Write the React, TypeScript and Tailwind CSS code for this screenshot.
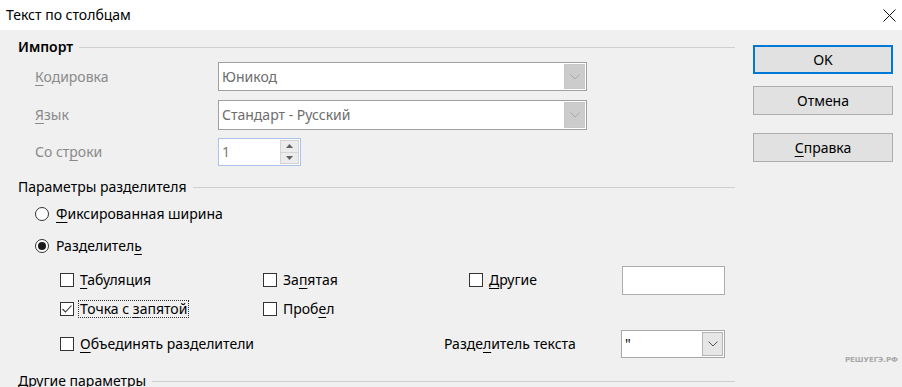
import React from 'react';

const Key: React.FC<{ text: string; at: number }> = ({ text, at }) => (
  <>
    {text.slice(0, at)}
    <span className="underline underline-offset-[3px] decoration-1">{text[at]}</span>
    {text.slice(at + 1)}
  </>
);

const Heading: React.FC<{ children: React.ReactNode; bold?: boolean; className?: string }> = ({ children, bold, className }) => (
  <div className={`flex items-center h-[20px] ${className ?? ''}`}>
    <span className={bold ? 'font-semibold' : ''}>{children}</span>
    <div className="flex-1 h-px bg-[#cfcfcf] ml-[6px] mt-[1px]" />
  </div>
);

const Chevron: React.FC<{ color: string }> = ({ color }) => (
  <svg width="10" height="6" viewBox="0 0 10 6">
    <path d="M0.5 0.5 L5 5 L9.5 0.5" fill="none" stroke={color} strokeWidth="1" />
  </svg>
);

const Combo: React.FC<{ value: string; disabled?: boolean; className?: string }> = ({ value, disabled, className }) => (
  <div
    className={`flex items-stretch bg-white border p-px ${disabled ? 'border-[#a0a0a0]' : 'border-[#a8a8a8]'} ${className ?? ''}`}
  >
    <span className={`flex-1 flex items-center pl-[2px] ${disabled ? 'text-[#6d6d6d]' : 'text-black'}`}>{value}</span>
    <div
      className={`w-[21px] flex items-center justify-center border ${disabled ? 'bg-[#cccccc] border-[#c8c8c8]' : 'bg-[#e6e6e6] border-[#b4b4b4]'}`}
    >
      <Chevron color={disabled ? '#a8a8a8' : '#555555'} />
    </div>
  </div>
);

const CheckBox: React.FC<{ checked?: boolean }> = ({ checked }) => (
  <span className="w-[14px] h-[14px] border border-[#333333] bg-white flex items-center justify-center shrink-0">
    {checked && (
      <svg width="12" height="12" viewBox="0 0 12 12">
        <path d="M1.5 6 L4.5 9 L10.5 2.5" fill="none" stroke="#333333" strokeWidth="1.1" />
      </svg>
    )}
  </span>
);

const Radio: React.FC<{ checked?: boolean }> = ({ checked }) => (
  <span className="w-[14px] h-[14px] rounded-full border border-[#333333] bg-white flex items-center justify-center shrink-0">
    {checked && <span className="w-[8px] h-[8px] rounded-full bg-[#1a1a1a]" />}
  </span>
);

const Check: React.FC<{ label: React.ReactNode; checked?: boolean; focused?: boolean }> = ({ label, checked, focused }) => (
  <div className="flex items-center gap-[5px]">
    <CheckBox checked={checked} />
    <span className={focused ? 'outline outline-1 outline-dotted outline-[#333] px-px leading-[16px]' : 'pl-px'}>{label}</span>
  </div>
);

const Button: React.FC<{ children: React.ReactNode; primary?: boolean; className?: string }> = ({ children, primary, className }) => (
  <div
    className={`w-[140px] h-[29px] flex items-center justify-center bg-[#e1e1e1] ${primary ? 'border-2 border-[#0078d7]' : 'border border-[#adadad]'} ${className ?? ''}`}
  >
    {children}
  </div>
);

export default function App() {
  return (
    <div className="w-[902px] h-[387px] overflow-hidden bg-[#f0f0f0] font-['Noto_Sans',sans-serif] text-[14px] text-black leading-none">
      <div className="h-[30px] bg-white flex items-center justify-between pl-[6px] pr-[6px]">
        <span className="text-[14px]">Текст по столбцам</span>
        <svg width="13" height="13" viewBox="0 0 13 13">
          <path d="M0.5 0.5 L12.5 12.5 M12.5 0.5 L0.5 12.5" stroke="#111" strokeWidth="1" />
        </svg>
      </div>

      <div className="flex">
        <div className="w-[735px] pl-[18px]">
          <Heading bold className="mt-[7px]">Импорт</Heading>

          <div className="flex items-center h-[29px] mt-[5px] pl-[17px]">
            <span className="w-[183px] text-[#8a8a8a]"><Key text="Кодировка" at={0} /></span>
            <Combo value="Юникод" disabled className="w-[369px] h-full" />
          </div>
          <div className="flex items-center h-[30px] mt-[9px] pl-[17px]">
            <span className="w-[183px] text-[#8a8a8a]"><Key text="Язык" at={0} /></span>
            <Combo value="Стандарт - Русский" disabled className="w-[369px] h-full" />
          </div>
          <div className="flex items-center h-[28px] mt-[8px] pl-[17px]">
            <span className="w-[183px] text-[#8a8a8a]"><Key text="Со строки" at={5} /></span>
            <div className="w-[83px] h-full flex items-stretch bg-white border border-[#a9c4e6] p-px">
              <span className="flex-1 flex items-center pl-[2px] text-[#7a7a7a]">1</span>
              <div className="w-[19px] flex flex-col border border-[#d4d4d4]">
                <div className="flex-1 flex items-center justify-center bg-[#ececec] border-b border-[#d4d4d4]">
                  <svg width="7" height="4" viewBox="0 0 7 4"><path d="M0 4 L3.5 0 L7 4 Z" fill="#606060" /></svg>
                </div>
                <div className="flex-1 flex items-center justify-center bg-[#ececec]">
                  <svg width="7" height="4" viewBox="0 0 7 4"><path d="M0 0 L3.5 4 L7 0 Z" fill="#606060" /></svg>
                </div>
              </div>
            </div>
          </div>

          <Heading className="mt-[11px]">Параметры разделителя</Heading>

          <div className="flex items-center gap-[7px] h-[20px] mt-[7px] pl-[17px]">
            <Radio />
            <span><Key text="Фиксированная ширина" at={0} /></span>
          </div>
          <div className="flex items-center gap-[7px] h-[20px] mt-[12px] pl-[17px]">
            <Radio checked />
            <span><Key text="Разделитель" at={10} /></span>
          </div>

          <div className="grid grid-cols-[203px_206px_153px_103px] items-center h-[30px] mt-[9px] pl-[42px]">
            <Check label={<Key text="Табуляция" at={0} />} />
            <Check label={<Key text="Запятая" at={2} />} />
            <Check label={<Key text="Другие" at={0} />} />
            <div className="h-[29px] bg-white border border-[#adadad]" />
          </div>
          <div className="grid grid-cols-[203px_206px] items-center h-[20px] mt-[4px] pl-[42px]">
            <Check checked focused label={<Key text="Точка с запятой" at={8} />} />
            <Check label={<Key text="Пробел" at={4} />} />
          </div>
          <div className="flex items-center h-[28px] mt-[11px] pl-[42px]">
            <div className="w-[384px]">
              <Check label={<Key text="Объединять разделители" at={0} />} />
            </div>
            <span className="w-[177px]"><Key text="Разделитель текста" at={5} /></span>
            <Combo value={'"'} className="w-[104px] h-full" />
          </div>

          <Heading className="mt-[13px]">Другие параметры</Heading>
        </div>

        <div className="flex-1 flex flex-col pl-[18px]">
          <Button primary className="mt-[15px]">OK</Button>
          <Button className="mt-[12px]">Отмена</Button>
          <Button className="mt-[18px]"><Key text="Справка" at={0} /></Button>
          <div className="mt-[195px] pr-[4px] text-right text-[7px] font-bold text-[#a8a8a8] font-['DejaVu_Sans',sans-serif]">
            РЕШУЕГЭ.РФ
          </div>
        </div>
      </div>
    </div>
  );
}
